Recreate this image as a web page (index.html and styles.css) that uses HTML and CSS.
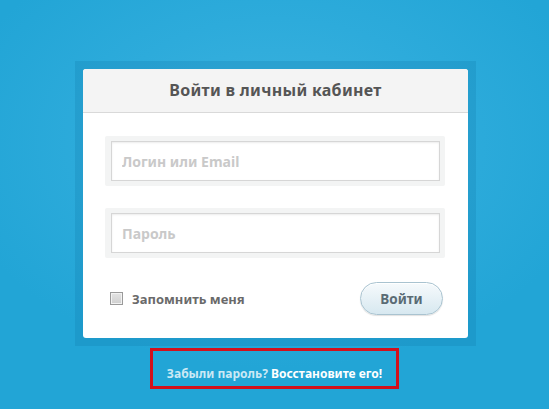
FILE: index.html
```html
<!DOCTYPE html>
<html lang="ru">
<head>
<meta charset="utf-8">
<title>Вход</title>
<link rel="stylesheet" href="styles.css">
</head>
<body>
<main class="page">
  <div class="frame">
    <form class="card">
      <div class="card-head">Войти в личный кабинет</div>
      <div class="card-body">
        <div class="field"><input class="input" type="text" placeholder="Логин или Email"></div>
        <div class="field"><input class="input" type="password" placeholder="Пароль"></div>
        <div class="row">
          <label class="remember"><span class="check"></span>Запомнить меня</label>
          <button class="btn" type="button">Войти</button>
        </div>
      </div>
    </form>
  </div>
  <div class="forgot">
    <span class="muted">Забыли пароль?</span> <a class="restore" href="#">Восстановите его!</a>
  </div>
</main>
</body>
</html>
```
FILE: styles.css
```css
html, body { margin: 0; padding: 0; }
body {
  width: 549px;
  height: 409px;
  overflow: hidden;
  background: radial-gradient(ellipse 60% 55% at 50% 35%, #3db3df 0%, #2dabdb 55%, #22a5d6 100%);
  font-family: "Noto Sans", "Open Sans", sans-serif;
}
.page {
  display: flex;
  flex-direction: column;
  align-items: center;
  padding-top: 61px;
}
.frame {
  padding: 8px;
  background: rgba(10, 110, 160, 0.2);
  margin-left: 2px;
}
.card {
  width: 385px;
  background: #fff;
  border-radius: 3px;
  margin: 0;
}
.card-head {
  height: 43px;
  line-height: 43px;
  background: #f4f4f4;
  border-bottom: 1px solid #d9d9d9;
  border-radius: 3px 3px 0 0;
  text-align: center;
  font-weight: 700;
  font-size: 16px;
  color: #555;
  letter-spacing: 0.3px;
}
.card-body {
  padding: 23px 23px 23px 22px;
  display: flex;
  flex-direction: column;
  gap: 22px;
}
.field {
  background: #f3f4f4;
  padding: 5px 5px 5px 6px;
  border-radius: 2px;
}
.input {
  display: block;
  box-sizing: border-box;
  width: 100%;
  height: 40px;
  border: 1px solid #d6d6d6;
  box-shadow: inset 0 1px 2px rgba(0,0,0,0.08);
  background: #fff;
  padding: 0 10px;
  font-family: inherit;
  font-weight: 700;
  font-size: 14px;
  color: #555;
  outline: none;
}
.input::placeholder { color: #c9c9c9; }
.row {
  display: flex;
  justify-content: space-between;
  align-items: center;
  margin-top: 2px;
  padding-left: 5px;
}
.remember {
  display: flex;
  align-items: center;
  gap: 9px;
  font-weight: 700;
  font-size: 13px;
  color: #6a6a6a;
}
.check {
  width: 11px;
  height: 11px;
  border: 1px solid #9a9a9a;
  background: linear-gradient(#e4e4e4, #cfcfcf);
  box-shadow: inset 0 0 0 1px #f2f2f2;
}
.btn {
  width: 83px;
  height: 33px;
  margin-right: 2px;
  border-radius: 17px;
  border: 1px solid #a9c3d0;
  background: linear-gradient(#f6fafc, #d7e8f0);
  box-shadow: 0 1px 1px rgba(0,0,0,0.12), inset 0 1px 0 #fff;
  font-family: inherit;
  font-weight: 700;
  font-size: 13.5px;
  color: #5a6b74;
  cursor: pointer;
  padding: 0;
}
.forgot {
  box-sizing: border-box;
  width: 249px;
  height: 41px;
  margin-top: 2px;
  border: 3px solid #d3101c;
  padding-top: 14px;
  text-align: center;
  font-size: 12px;
  font-weight: 700;
  white-space: nowrap;
}
.muted { color: #cbe9f5; }
.restore { color: #fff; text-decoration: none; }
```
